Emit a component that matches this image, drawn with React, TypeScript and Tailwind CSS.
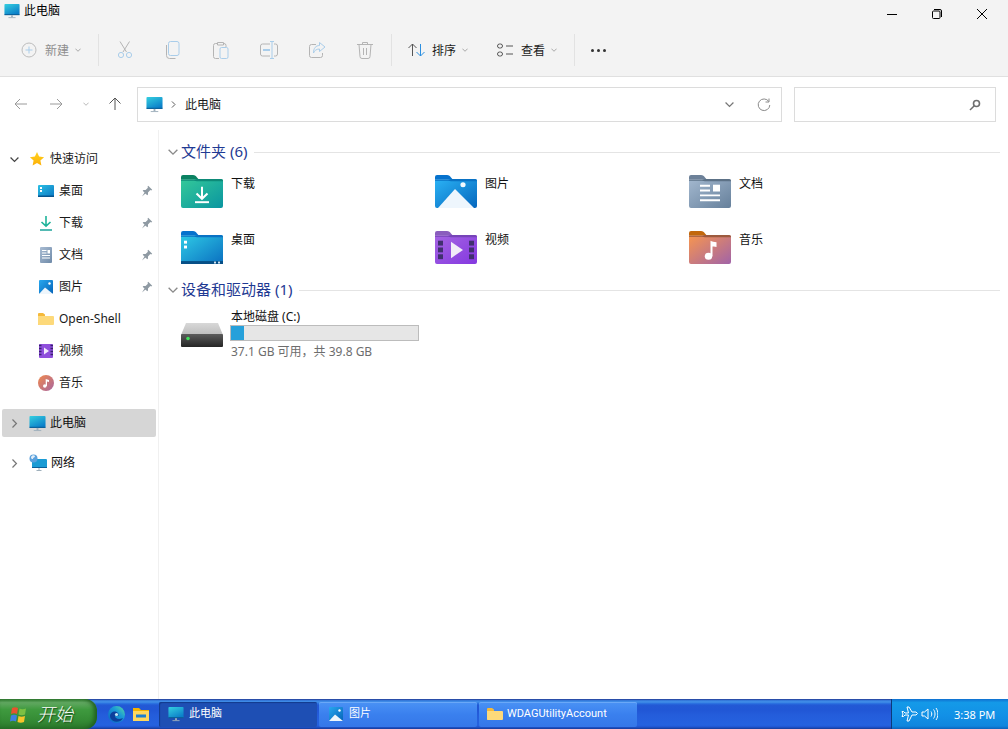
import type { ReactNode } from "react";

const FONT = "[font-family:'Noto_Sans','Noto_Sans_CJK_SC',sans-serif]";

function Monitor({ w = 18, id }: { w?: number; id: string }) {
  return (
    <svg width={w} height={w} viewBox="0 0 18 18" className="shrink-0">
      <defs>
        <linearGradient id={id} x1="0" y1="0" x2="0.6" y2="1">
          <stop offset="0" stopColor="#35d0e0" />
          <stop offset="1" stopColor="#0b7fc9" />
        </linearGradient>
      </defs>
      <rect x="0.5" y="1" width="17" height="12.5" rx="1" fill={`url(#${id})`} />
      <rect x="0.5" y="12.5" width="17" height="1.2" fill="#0a5f98" />
      <rect x="8" y="13.7" width="2" height="2.3" fill="#9fb0bc" />
      <rect x="5" y="16" width="8" height="1" fill="#9fb0bc" />
    </svg>
  );
}

function Chevron({ open, className = "", size = 8, color = "#777" }: { open?: boolean; className?: string; size?: number; color?: string }) {
  return (
    <svg width={size} height={size} viewBox="0 0 8 8" className={`shrink-0 ${className}`}>
      <path d={open ? "M0.5 2.2 4 5.7 7.5 2.2" : "M2.2 0.5 5.7 4 2.2 7.5"} fill="none" stroke={color} strokeWidth="1.1" />
    </svg>
  );
}

function ToolBtn({ children }: { children: ReactNode }) {
  return <div className="flex h-[32px] w-[48px] items-center justify-center">{children}</div>;
}

const G = "#b4b4b4";
const B = "#a9cdea";

const CutIcon = (
  <svg width="18" height="18" viewBox="0 0 18 18" fill="none" strokeWidth="1">
    <path d="M4 0.5 10.5 11M13.5 0.5 7 11" stroke={G} />
    <circle cx="5" cy="14" r="2.6" stroke={B} />
    <circle cx="13" cy="14" r="2.6" stroke={B} />
  </svg>
);
const CopyIcon = (
  <svg width="18" height="18" viewBox="0 0 18 18" fill="none" strokeWidth="1">
    <rect x="4.5" y="0.5" width="10.5" height="14" rx="2" stroke={B} />
    <path d="M2.5 4v10.5a3 3 0 0 0 3 3h6" stroke={G} />
  </svg>
);
const PasteIcon = (
  <svg width="18" height="18" viewBox="0 0 18 18" fill="none" strokeWidth="1">
    <path d="M6 2.5H3.5a2 2 0 0 0-2 2v11a2 2 0 0 0 2 2H7M11 2.5h1a2 2 0 0 1 2 2V6M5.5 1.5h6v2.5h-6z" stroke={G} />
    <rect x="8" y="6.5" width="8" height="11" rx="1.5" stroke={B} />
  </svg>
);
const RenameIcon = (
  <svg width="18" height="18" viewBox="0 0 18 18" fill="none" strokeWidth="1">
    <path d="M10 3H2.5a2 2 0 0 0-2 2v8a2 2 0 0 0 2 2H10M14 3h1.5a2 2 0 0 1 2 2v8a2 2 0 0 1-2 2H14" stroke={G} />
    <path d="M10 0.5h4M12 0.5v17M10 17.5h4" stroke={B} />
    <rect x="3" y="8" width="7" height="2" fill={B} />
  </svg>
);
const ShareIcon = (
  <svg width="18" height="18" viewBox="0 0 18 18" fill="none" strokeWidth="1">
    <path d="M8 3.5H3.5a2 2 0 0 0-2 2v9a2 2 0 0 0 2 2h9a2 2 0 0 0 2-2V12" stroke={G} />
    <path d="M11.5 1.5 17 6l-5.500 4.500V8C8.500 8 6.500 9.500 5.500 12c0-5 2.500-7.500 6-7.500z" stroke={B} />
  </svg>
);
const TrashIcon = (
  <svg width="18" height="18" viewBox="0 0 18 18" fill="none" stroke={G} strokeWidth="1">
    <path d="M1 3.500h16M6.500 3.500V1.500h5v2M3 3.500l1 12a2 2 0 0 0 2 2h6a2 2 0 0 0 2-2l1-12M7.500 7v7M10.500 7v7" />
  </svg>
);

function Pin() {
  return (
    <svg width="12" height="12" viewBox="0 0 12 12" className="shrink-0">
      <path d="M7.200 0.800 11.200 4.800 10.200 5.500 9.300 5.100 7 7.400 7 9.600 6.200 10.300 1.700 5.800 2.400 5 4.600 5 6.900 2.700 6.500 1.800zM3.500 7.500 4.500 8.500 1 11.500z" fill="#8f9aa3" />
    </svg>
  );
}

function Star() {
  return (
    <svg width="16" height="16" viewBox="0 0 16 16" className="shrink-0">
      <defs>
        <linearGradient id="star" x1="0" y1="0" x2="0" y2="1">
          <stop offset="0" stopColor="#ffd21f" />
          <stop offset="1" stopColor="#fdaf07" />
        </linearGradient>
      </defs>
      <path d="M8 1l2.100 4.600 5 .6-3.700 3.400 1 5L8 12.100 3.600 14.600l1-5L.9 6.200l5-.6z" fill="url(#star)" />
    </svg>
  );
}

const DesktopSmall = (
  <svg width="16" height="16" viewBox="0 0 16 16">
    <defs>
      <linearGradient id="dsk" x1="0" y1="0" x2="1" y2="1">
        <stop offset="0" stopColor="#2cc0e4" />
        <stop offset="1" stopColor="#0b78c4" />
      </linearGradient>
    </defs>
    <rect x="0" y="2" width="16" height="12" rx="1" fill="url(#dsk)" />
    <rect x="0" y="12.500" width="16" height="1.500" fill="#07558f" />
    <rect x="2" y="4" width="2" height="2" fill="#fff" />
    <rect x="2" y="7" width="2" height="2" fill="#fff" />
  </svg>
);
const DownloadSmall = (
  <svg width="16" height="16" viewBox="0 0 16 16" fill="none" stroke="#1fb39a" strokeWidth="1.600">
    <path d="M8 1v10M3.500 7 8 11.200 12.500 7" />
    <path d="M2 15h12" stroke="#2aa9a0" />
  </svg>
);
const DocSmall = (
  <svg width="16" height="16" viewBox="0 0 16 16">
    <defs>
      <linearGradient id="docs" x1="0" y1="0" x2="1" y2="1">
        <stop offset="0" stopColor="#a9bcd3" />
        <stop offset="1" stopColor="#6f8aa8" />
      </linearGradient>
    </defs>
    <rect x="2" y="0" width="12" height="16" rx="1" fill="url(#docs)" />
    <path d="M4 3.500h4.500M4 6h4.500M4 8.500h8M4 11h8" stroke="#fff" />
    <rect x="9.500" y="3" width="2.500" height="3.500" fill="#fff" />
  </svg>
);
const PicSmall = (
  <svg width="16" height="16" viewBox="0 0 16 16">
    <defs>
      <linearGradient id="pics" x1="0" y1="0" x2="1" y2="1">
        <stop offset="0" stopColor="#28a8ef" />
        <stop offset="1" stopColor="#0563b8" />
      </linearGradient>
    </defs>
    <rect x="1" y="1" width="14" height="14" rx="1" fill="url(#pics)" />
    <path d="M1 15 7 8.500 15 15z" fill="#eef6fc" />
    <circle cx="11.500" cy="4.500" r="1.200" fill="#fff" />
  </svg>
);
const OpenFolderSmall = (
  <svg width="16" height="16" viewBox="0 0 16 16">
    <path d="M0 3a1 1 0 0 1 1-1h4l2 1.500V14H1a1 1 0 0 1-1-1z" fill="#f5b93a" />
    <path d="M0 5h15a1 1 0 0 1 1 1v7a1 1 0 0 1-1 1H1a1 1 0 0 1-1-1z" fill="#fdd97a" />
  </svg>
);
const VideoSmall = (
  <svg width="16" height="16" viewBox="0 0 16 16">
    <rect x="1" y="1" width="14" height="14" rx="1" fill="#8f4fdc" />
    <path d="M1 2.500h2.500M1 5.500h2.500M1 8.500h2.500M1 11.500h2.500M12.500 2.500H15M12.500 5.500H15M12.500 8.500H15M12.500 11.500H15" stroke="#3a2070" strokeWidth="1.500" />
    <path d="M6 4.500 11 8 6 11.500z" fill="#f2eafc" />
  </svg>
);
const MusicSmall = (
  <svg width="16" height="16" viewBox="0 0 16 16">
    <defs>
      <linearGradient id="mus" x1="0" y1="0" x2="1" y2="1">
        <stop offset="0" stopColor="#f08a4e" />
        <stop offset="1" stopColor="#a8659f" />
      </linearGradient>
    </defs>
    <circle cx="8" cy="8" r="8" fill="url(#mus)" />
    <circle cx="6.800" cy="11" r="1.800" fill="#fff" />
    <path d="M7.700 11V4l3.300 1v2l-2-.6V11z" fill="#fff" />
  </svg>
);
const NetworkIcon = (
  <svg width="18" height="18" viewBox="0 0 18 18" className="shrink-0">
    <rect x="3" y="5" width="15" height="9" rx="1" fill="#1a9bd4" />
    <rect x="3" y="13" width="15" height="1" fill="#0a5f98" />
    <path d="M10 14v2M7.500 16.500h5" stroke="#9fb0bc" />
    <circle cx="4.500" cy="4.500" r="4" fill="#5aa0dc" />
    <path d="M2 3c1-2 3-2 4-1 0 2-2 1-2 3-1 0-2 0-2-2z" fill="#e3eef8" />
  </svg>
);

type NavEntry = { label: string; icon: ReactNode; pin?: boolean };
const quick: NavEntry[] = [
  { label: "桌面", icon: DesktopSmall, pin: true },
  { label: "下载", icon: DownloadSmall, pin: true },
  { label: "文档", icon: DocSmall, pin: true },
  { label: "图片", icon: PicSmall, pin: true },
  { label: "Open-Shell", icon: OpenFolderSmall },
  { label: "视频", icon: VideoSmall },
  { label: "音乐", icon: MusicSmall },
];

function Folder({ id, tab, from, to, edge, children }: { id: string; tab: string; from: string; to: string; edge: string; children?: ReactNode }) {
  return (
    <svg width="42" height="33" viewBox="0 0 42 34" preserveAspectRatio="none" className="shrink-0">
      <defs>
        <linearGradient id={id} x1="0" y1="0" x2="1" y2="1">
          <stop offset="0" stopColor={from} />
          <stop offset="1" stopColor={to} />
        </linearGradient>
      </defs>
      <path d="M0 2a2 2 0 0 1 2-2h10c2 0 3 1 4 2.500L18 5H0z" fill={tab} />
      <path d="M0 5h12l4-1h24a2 2 0 0 1 2 2v26a2 2 0 0 1-2 2H2a2 2 0 0 1-2-2z" fill={`url(#${id})`} />
      <path d="M0 5h13l3-1h24a2 2 0 0 1 2 2v.500H16L13 6H0z" fill={edge} />
      {children}
    </svg>
  );
}

const folders: { label: string; icon: ReactNode }[] = [
  {
    label: "下载",
    icon: (
      <Folder id="fdl" tab="#0b8262" from="#34c999" to="#0a95a0" edge="#0e8a78">
        <path d="M21 12v12M15.500 19 21 24.500 26.500 19" fill="none" stroke="#fff" strokeWidth="2" />
        <rect x="14" y="27" width="14" height="2" fill="#fff" />
      </Folder>
    ),
  },
  {
    label: "图片",
    icon: (
      <Folder id="fpc" tab="#0672cd" from="#2bb3f5" to="#0566bd" edge="#0a72c4">
        <path d="M3 34 20 14.500 39 34z" fill="#eef6fd" />
        <circle cx="28" cy="10" r="2.600" fill="#f2f9fe" />
      </Folder>
    ),
  },
  {
    label: "文档",
    icon: (
      <Folder id="fdc" tab="#6d8199" from="#a3b8cf" to="#66809b" edge="#5c7186">
        <path d="M11 11h10M11 16h10M11 21h20M11 26h20" stroke="#fff" strokeWidth="2" />
        <rect x="24" y="10" width="7" height="7" fill="#fff" />
      </Folder>
    ),
  },
  {
    label: "桌面",
    icon: (
      <Folder id="fds" tab="#0672cd" from="#2fcbe6" to="#0a6fc0" edge="#0a72c4">
        <rect x="0" y="31" width="42" height="3" fill="#074f86" />
        <rect x="33" y="31.500" width="2" height="2" fill="#cfe3f2" />
        <rect x="37" y="31.500" width="2" height="2" fill="#cfe3f2" />
        <rect x="3" y="10" width="3" height="3" fill="#fff" />
        <rect x="3" y="15" width="3" height="3" fill="#fff" />
      </Folder>
    ),
  },
  {
    label: "视频",
    icon: (
      <Folder id="fvd" tab="#8a5dbd" from="#a565e2" to="#8438e0" edge="#7644b8">
        <g fill="#40306f">
          <rect x="3" y="10" width="5" height="5" />
          <rect x="3" y="17" width="5" height="5" />
          <rect x="3" y="24" width="5" height="5" />
          <rect x="34" y="10" width="5" height="5" />
          <rect x="34" y="17" width="5" height="5" />
          <rect x="34" y="24" width="5" height="5" />
        </g>
        <path d="M16 11 28 19.500 16 28z" fill="#f1ebf8" />
      </Folder>
    ),
  },
  {
    label: "音乐",
    icon: (
      <Folder id="fms" tab="#c2680c" from="#f8964e" to="#a163a8" edge="#9c5a3e">
        <circle cx="19.500" cy="26" r="3.700" fill="#fff" />
        <path d="M21.500 26V10c1 1 4 1 6 1.500v5c-2-.500-3.500-.500-4-.500V26z" fill="#fff" />
      </Folder>
    ),
  },
];

function SectionHeading({ label }: { label: string }) {
  return (
    <div className="flex h-[20px] items-center">
      <Chevron open size={10} color="#8a8a8a" className="ml-[2px]" />
      <span className="ml-[3px] -translate-y-px text-[15px] leading-none text-[#1f3a93]">{label}</span>
      <div className="ml-[7px] h-px flex-1 bg-[#e4e4e4]" />
    </div>
  );
}

function TaskButton({ label, icon, active }: { label: string; icon: ReactNode; active?: boolean }) {
  return (
    <div
      className={`flex h-[25px] w-[158px] shrink-0 items-center gap-[5px] rounded-[2px] pl-[9px] text-[11px] text-white [font-family:Roboto,'Noto_Sans_CJK_SC',sans-serif] ${
        active
          ? "bg-[#1e4fb4] shadow-[inset_1px_1px_1px_#123a8c]"
          : "bg-[linear-gradient(180deg,#4a92f5_0%,#3a80ee_50%,#3577e8_100%)] shadow-[inset_0_1px_0_#6aa8f8]"
      }`}
    >
      {icon}
      <span>{label}</span>
    </div>
  );
}

export default function App() {
  return (
    <div className={`flex h-[729px] w-[1008px] flex-col overflow-hidden bg-white text-[12px] text-black ${FONT}`}>
      {/* Header */}
      <div className="h-[77px] shrink-0 border-b border-[#e0e0e0] bg-[#f3f3f3]">
        <div className="flex h-[26px] items-start justify-between">
          <div className="flex h-[22px] items-center gap-[4px] pl-[4px]">
            <Monitor id="m1" w={16} />
            <span>此电脑</span>
          </div>
          <div className="mr-[4px] flex h-[28px]">
            <div className="flex w-[45px] items-center justify-center">
              <div className="h-px w-[10px] bg-black" />
            </div>
            <div className="flex w-[45px] items-center justify-center">
              <svg width="10" height="10" viewBox="0 0 10 10" fill="none" stroke="#000">
                <rect x="0.500" y="2" width="7.500" height="7.500" rx="1" />
                <path d="M2 0.500h6a1.500 1.500 0 0 1 1.500 1.500v6" />
              </svg>
            </div>
            <div className="flex w-[45px] items-center justify-center">
              <svg width="10" height="10" viewBox="0 0 10 10" stroke="#000">
                <path d="M0 0 10 10M10 0 0 10" />
              </svg>
            </div>
          </div>
        </div>
        <div className="flex h-[48px] items-center pl-[21px]">
          <div className="flex w-[77px] items-center text-[#8e8e8e]">
            <svg width="16" height="16" viewBox="0 0 16 16" fill="none" className="shrink-0">
              <circle cx="8" cy="8" r="7" stroke="#bdbdbd" />
              <path d="M8 4.500v7M4.500 8h7" stroke="#a9cdea" />
            </svg>
            <span className="ml-[8px] translate-y-px">新建</span>
            <Chevron open size={6} color="#999" className="ml-[6px]" />
          </div>
          <div className="h-[32px] w-px bg-[#e2e2e2]" />
          <div className="ml-[2px] flex">
            <ToolBtn>{CutIcon}</ToolBtn>
            <ToolBtn>{CopyIcon}</ToolBtn>
            <ToolBtn>{PasteIcon}</ToolBtn>
            <ToolBtn>{RenameIcon}</ToolBtn>
            <ToolBtn>{ShareIcon}</ToolBtn>
            <ToolBtn>{TrashIcon}</ToolBtn>
          </div>
          <div className="ml-[2px] h-[32px] w-px bg-[#e2e2e2]" />
          <div className="ml-[16px] flex items-center text-[#1c1c1c]">
            <svg width="17" height="16" viewBox="0 0 17 16" fill="none" className="shrink-0">
              <path d="M4.500 14V2M0.500 6 4.500 2l4 4" stroke="#555" />
              <path d="M12.500 2v12M8.500 10l4 4 4-4" stroke="#2b8fe0" />
            </svg>
            <span className="ml-[7px] translate-y-px">排序</span>
            <Chevron open size={6} color="#999" className="ml-[6px]" />
          </div>
          <div className="ml-[29px] flex items-center text-[#1c1c1c]">
            <svg width="16" height="14" viewBox="0 0 16 14" fill="none" stroke="#555" className="shrink-0">
              <rect x="0.500" y="1" width="5" height="4" rx="2" />
              <rect x="0.500" y="9" width="5" height="4" rx="2" />
              <path d="M9 3h7M9 11h7" />
            </svg>
            <span className="ml-[8px] translate-y-px">查看</span>
            <Chevron open size={6} color="#999" className="ml-[6px]" />
          </div>
          <div className="ml-[17px] h-[32px] w-px bg-[#e2e2e2]" />
          <div className="ml-[16px] flex gap-[3px]">
            <div className="size-[3px] rounded-full bg-[#333]" />
            <div className="size-[3px] rounded-full bg-[#333]" />
            <div className="size-[3px] rounded-full bg-[#333]" />
          </div>
        </div>
      </div>

      {/* Address row */}
      <div className="flex h-[53px] shrink-0 items-center pb-[1px] pt-[3px]">
        <div className="flex w-[137px] shrink-0 items-center -translate-y-px">
          <svg width="14" height="12" viewBox="0 0 14 12" fill="none" stroke="#9a9a9a" className="ml-[14px] shrink-0">
            <path d="M13 6H1M6 1 1 6l5 5" />
          </svg>
          <svg width="14" height="12" viewBox="0 0 14 12" fill="none" stroke="#9a9a9a" className="ml-[21px] shrink-0">
            <path d="M1 6h12M8 1l5 5-5 5" />
          </svg>
          <Chevron open size={6} color="#aaa" className="ml-[20px]" />
          <svg width="14" height="14" viewBox="0 0 14 14" fill="none" stroke="#555" className="ml-[19px] shrink-0">
            <path d="M7 13V1M1.500 6.500 7 1l5.500 5.500" />
          </svg>
        </div>
        <div className="flex h-[35px] w-[645px] shrink-0 items-center border border-[#dcdcdc] pl-[8px]">
          <Monitor id="m2" w={17} />
          <Chevron size={7} color="#555" className="ml-[7px]" />
          <span className="ml-[8px] text-[#1a1a1a]">此电脑</span>
          <Chevron open size={9} color="#777" className="ml-auto" />
          <svg width="14" height="14" viewBox="0 0 14 14" fill="none" stroke="#8a8a8a" className="ml-[23px] mr-[10px] shrink-0">
            <path d="M11.800 3.500A5.800 5.800 0 1 0 12.800 7M12 0.500v3.500H8.500" />
          </svg>
        </div>
        <div className="ml-[12px] flex h-[35px] w-[202px] shrink-0 items-center justify-end border border-[#dcdcdc] pr-[14px]">
          <svg width="12" height="12" viewBox="0 0 12 12" fill="none" stroke="#6e6e6e" className="shrink-0">
            <circle cx="7.500" cy="4.500" r="3" strokeWidth="1.600" />
            <path d="M5.300 6.700 1 11" strokeWidth="1.500" />
          </svg>
        </div>
      </div>

      {/* Body */}
      <div className="flex min-h-0 flex-1">
        <nav className="w-[159px] shrink-0 border-r border-[#f0f0f0] pl-[2px] pt-[13px]">
          <div className="flex h-[32px] items-center">
            <Chevron open size={9} color="#444" className="ml-[8px]" />
            <span className="ml-[10px] flex"><Star /></span>
            <span className="ml-[5px] text-[#222]">快速访问</span>
          </div>
          {quick.map((item) => (
            <div key={item.label} className="flex h-[32px] items-center pl-[36px] pr-[5px]">
              <span className="flex w-[16px] shrink-0 justify-center">{item.icon}</span>
              <span className="ml-[5px] text-[#1a1a1a]">{item.label}</span>
              {item.pin && <span className="ml-auto flex"><Pin /></span>}
            </div>
          ))}
          <div className="mt-[10px] flex h-[28px] w-[154px] items-center rounded-[2px] bg-[#d6d6d6]">
            <Chevron size={9} color="#777" className="ml-[8px]" />
            <span className="ml-[10px] flex"><Monitor id="m3" w={17} /></span>
            <span className="ml-[4px] text-[#111]">此电脑</span>
          </div>
          <div className="mt-[12px] flex h-[28px] items-center">
            <Chevron size={9} color="#777" className="ml-[8px]" />
            <span className="ml-[10px] flex">{NetworkIcon}</span>
            <span className="ml-[4px] text-[#111]">网络</span>
          </div>
        </nav>

        <main className="min-w-0 flex-1 pl-[7px] pr-[8px] pt-[12px]">
          <SectionHeading label="文件夹 (6)" />
          <div className="mt-[13px] grid grid-cols-[254px_254px_1fr] gap-y-[22px] pl-[15px]">
            {folders.map((f) => (
              <div key={f.label} className="flex h-[34px] items-start gap-[8px]">
                {f.icon}
                <span className="leading-[18px] text-[#111]">{f.label}</span>
              </div>
            ))}
          </div>
          <div className="mt-[15px]">
            <SectionHeading label="设备和驱动器 (1)" />
          </div>
          <div className="mt-[8px] flex items-center pl-[15px]">
            <svg width="42" height="26" viewBox="0 0 42 26" className="mt-[1px] shrink-0">
              <defs>
                <linearGradient id="hdd" x1="0" y1="0" x2="0" y2="1">
                  <stop offset="0" stopColor="#5c5c5c" />
                  <stop offset="1" stopColor="#252525" />
                </linearGradient>
                <linearGradient id="hddtop" x1="0" y1="0" x2="0" y2="1">
                  <stop offset="0" stopColor="#d8d8d8" />
                  <stop offset="1" stopColor="#bdbdbd" />
                </linearGradient>
              </defs>
              <path d="M5 1h32l5 12H0z" fill="url(#hddtop)" />
              <rect x="0" y="12" width="42" height="13" rx="1" fill="url(#hdd)" />
              <circle cx="7" cy="16.500" r="1.800" fill="#3ee05a" />
            </svg>
            <div className="ml-[7px] flex flex-col">
              <span className="ml-[1px] h-[17px] leading-[17px] text-[#111]">本地磁盘 (C:)</span>
              <div className="h-[16px] w-[189px] border border-[#bcbcbc] bg-[#e6e6e6]">
                <div className="h-full w-[13px] bg-[#26a0da]" />
              </div>
              <span className="ml-[1px] mt-[2px] leading-[18px] text-[#6d6d6d]">37.1 GB 可用，共 39.8 GB</span>
            </div>
          </div>
        </main>
      </div>

      {/* Taskbar */}
      <div className="flex h-[30px] shrink-0 items-stretch bg-[linear-gradient(180deg,#1f2f86_0%,#3165c4_3%,#3682e5_6%,#4490e6_10%,#3883e5_12%,#2b71e0_15%,#2663da_18%,#235bd6_20%,#2258d5_23%,#2157d6_38%,#245ddb_54%,#2562df_86%,#245fdc_89%,#2158d4_92%,#1d4ec0_95%,#1941a5_98%)]">
        <div className="flex w-[97px] shrink-0 items-center rounded-r-[12px] bg-[linear-gradient(180deg,#3c8a3c_0%,#62a862_12%,#3f9a3f_35%,#358c35_70%,#2b762b_100%)] pl-[10px] shadow-[inset_-3px_0_4px_#1f5f1f]">
          <svg width="19" height="19" viewBox="0 0 19 19" className="shrink-0">
            <path d="M2 3c2-1 4-1 6 0l-1 6c-2-1-4-1-6 0z" fill="#e8522e" />
            <path d="M9.500 3.500c2 1 4 1 6.500 0l-1 6c-2 1-4.500 1-6.500 0z" fill="#7cc043" />
            <path d="M1 10.500c2-1 4-1 6 0l-1 6c-2-1-4-1-6 0z" fill="#3f7fe0" />
            <path d="M8.500 11c2 1 4 1 6.500 0l-1 6c-2 1-4.500 1-6.500 0z" fill="#f7c52a" />
          </svg>
          <span className="ml-[8px] text-[18px] font-light italic leading-none text-white [text-shadow:1px_1px_1px_#1c4c1c]">开始</span>
        </div>
        <div className="flex w-[62px] shrink-0 items-center">
          <svg width="17" height="17" viewBox="0 0 17 17" className="ml-[11px] shrink-0">
            <defs>
              <linearGradient id="edge" x1="0" y1="1" x2="1" y2="0">
                <stop offset="0" stopColor="#0a63c4" />
                <stop offset="0.6" stopColor="#1a9ad6" />
                <stop offset="1" stopColor="#5be0a0" />
              </linearGradient>
            </defs>
            <circle cx="8.500" cy="8.500" r="8.500" fill="url(#edge)" />
            <path d="M2 10c0-3 3-5 5.500-4.500C10 6 11 8 10.500 10H7c0 2.500 3.500 4 8 2-2 4-7 5-10.500 2.500C3 13.500 2 11.500 2 10z" fill="#0c3f9c" />
            <circle cx="8.500" cy="8.500" r="1.600" fill="#bfe6f5" />
          </svg>
          <svg width="16" height="16" viewBox="0 0 16 16" className="ml-[8px] shrink-0">
            <path d="M0 2h6l2 2h8v2H0z" fill="#f5b400" />
            <rect x="0" y="5" width="16" height="10" fill="#ffd75e" />
            <rect x="3" y="8.500" width="10" height="3" fill="#1f7fd0" />
          </svg>
        </div>
        <div className="flex flex-1 items-center gap-[2px]">
          <TaskButton active label="此电脑" icon={<Monitor id="m4" w={16} />} />
          <TaskButton label="图片" icon={PicSmall} />
          <TaskButton label="WDAGUtilityAccount" icon={<span className="-mx-[1px] flex">{OpenFolderSmall}</span>} />
        </div>
        <div className="flex w-[117px] shrink-0 items-center border-l border-[#0c3a7a] bg-[linear-gradient(180deg,#0f6fd0_0%,#149ae8_12%,#1290e6_55%,#0f86de_90%,#0b62bb_100%)] pl-[9px] text-white">
          <svg width="17" height="16" viewBox="0 0 17 16" fill="none" stroke="#fff" className="shrink-0">
            <path d="M6 1h2l3 5h4l1.500 1.500L15 9h-4l-3 6H6l1.500-6H4L2.500 10.500H1L2 8 1 5.500h1.500L4 7h3.500z" />
          </svg>
          <svg width="17" height="14" viewBox="0 0 17 14" fill="none" stroke="#fff" className="ml-[3px] shrink-0">
            <path d="M1 5v4h2.500L7 12V2L3.500 5zM10 4.500c1 1.500 1 3.500 0 5M12.500 2.500c2 2.500 2 6.500 0 9M15 1c2.500 3.500 2.500 8.500 0 12" />
          </svg>
          <span className="ml-[16px] text-[11px] leading-none">3:38 PM</span>
        </div>
      </div>
    </div>
  );
}
